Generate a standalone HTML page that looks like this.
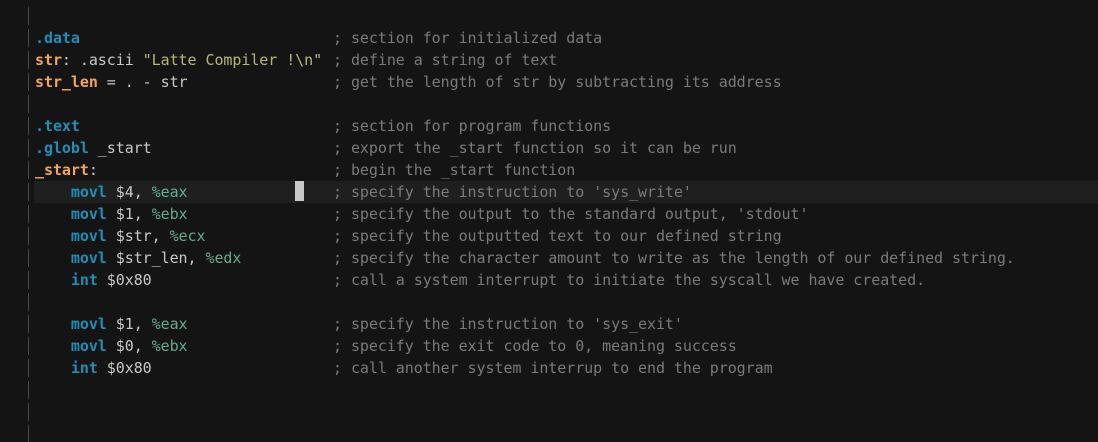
<!DOCTYPE html>
<html><head><meta charset="utf-8"><style>
html,body{margin:0;padding:0;background:#141414;width:1098px;height:442px;overflow:hidden}
.ed{position:relative;width:1098px;height:442px;font-family:"DejaVu Sans Mono","Liberation Mono",monospace;font-size:15px;color:#c8c8c8;letter-spacing:-0.06px}
.l{position:absolute;left:0;height:22px;line-height:22px;width:1098px;white-space:pre}
.l .g{position:absolute;left:28px;top:2px;width:1px;height:18px;background:#4a4a4a}
.l .t{position:absolute;left:35px;top:0}
.l .c{position:absolute;left:333px;top:0;color:#7a7a7a}
.k{color:#1e8fb8;font-weight:bold}
.o{color:#f2a65a;font-weight:bold}
.s{color:#b8b86c}
.r{color:#5fae8c}
.cur{background:#1f1f1f}
</style></head><body><div class="ed">
<div class="l" style="top:5px"><span class="g"></span></div>
<div class="l" style="top:27px"><span class="g"></span><span class="t"><span class="k">.data</span></span><span class="c">; section for initialized data</span></div>
<div class="l" style="top:49px"><span class="g"></span><span class="t"><span class="o">str</span>: .ascii <span class="s">"Latte Compiler !\n"</span></span><span class="c">; define a string of text</span></div>
<div class="l" style="top:71px"><span class="g"></span><span class="t"><span class="o">str_len</span> = . - str</span><span class="c">; get the length of str by subtracting its address</span></div>
<div class="l" style="top:93px"><span class="g"></span></div>
<div class="l" style="top:115px"><span class="g"></span><span class="t"><span class="k">.text</span></span><span class="c">; section for program functions</span></div>
<div class="l" style="top:137px"><span class="g"></span><span class="t"><span class="k">.globl</span> _start</span><span class="c">; export the _start function so it can be run</span></div>
<div class="l" style="top:159px"><span class="g"></span><span class="t"><span class="o">_start</span>:</span><span class="c">; begin the _start function</span></div>
<div class="l cur" style="top:181px;left:34px;width:1064px"></div>
<div class="l" style="top:181px"><span class="g"></span><span class="t">    <span class="k">movl</span> $4, <span class="r">%eax</span></span><span class="c">; specify the instruction to 'sys_write'</span></div>
<div style="position:absolute;left:295px;top:181px;width:9px;height:20px;background:#c8c8c8"></div>
<div class="l" style="top:203px"><span class="g"></span><span class="t">    <span class="k">movl</span> $1, <span class="r">%ebx</span></span><span class="c">; specify the output to the standard output, 'stdout'</span></div>
<div class="l" style="top:225px"><span class="g"></span><span class="t">    <span class="k">movl</span> $str, <span class="r">%ecx</span></span><span class="c">; specify the outputted text to our defined string</span></div>
<div class="l" style="top:247px"><span class="g"></span><span class="t">    <span class="k">movl</span> $str_len, <span class="r">%edx</span></span><span class="c">; specify the character amount to write as the length of our defined string.</span></div>
<div class="l" style="top:269px"><span class="g"></span><span class="t">    <span class="k">int</span> $0x80</span><span class="c">; call a system interrupt to initiate the syscall we have created.</span></div>
<div class="l" style="top:291px"><span class="g"></span></div>
<div class="l" style="top:313px"><span class="g"></span><span class="t">    <span class="k">movl</span> $1, <span class="r">%eax</span></span><span class="c">; specify the instruction to 'sys_exit'</span></div>
<div class="l" style="top:335px"><span class="g"></span><span class="t">    <span class="k">movl</span> $0, <span class="r">%ebx</span></span><span class="c">; specify the exit code to 0, meaning success</span></div>
<div class="l" style="top:357px"><span class="g"></span><span class="t">    <span class="k">int</span> $0x80</span><span class="c">; call another system interrup to end the program</span></div>
<div class="l" style="top:379px"><span class="g"></span></div>
<div class="l" style="top:401px"><span class="g"></span></div>
<div class="l" style="top:423px"><span class="g"></span></div>
</div></body></html>
